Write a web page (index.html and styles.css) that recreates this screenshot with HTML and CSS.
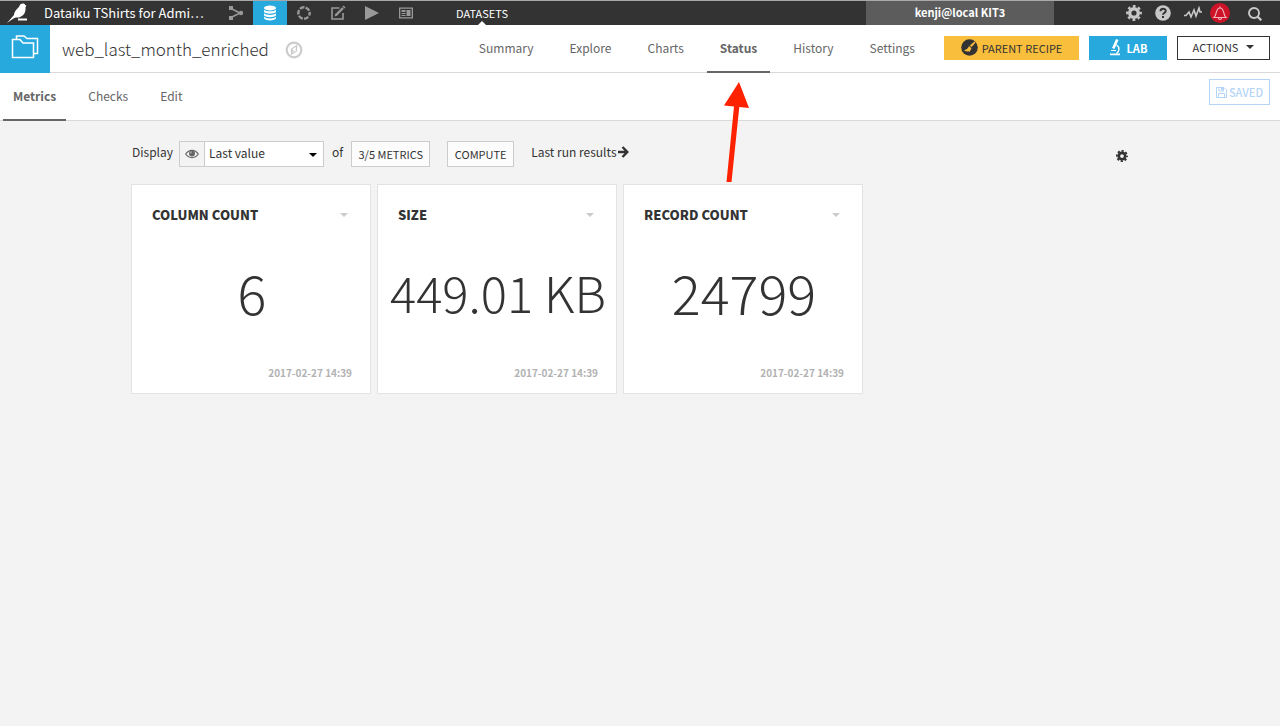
FILE: index.html
```html
<!DOCTYPE html>
<html lang="en">
<head>
<meta charset="utf-8">
<title>web_last_month_enriched</title>
<link rel="stylesheet" href="styles.css">
</head>
<body>
<header class="topbar">
  <a class="logo" href="#" aria-label="Home"><svg width="22" height="20" viewBox="0 0 22 20"><path fill="#fff" d="M0 20L7 12C7.500 7 11 6 12.500 3C13.500 0 17 0 18.300 2L19.500 2.800L18.500 4C19 10 16.500 13 12 14.500H9C7 15 5 16.500 3.500 17.500z"/><path fill="#fff" d="M11 15.500h9v2h-9z"/></svg></a>
  <a class="project" href="#">Dataiku TShirts for Admi…</a>
  <nav class="tools" aria-label="Project">
    <a href="#" aria-label="Flow"><svg width="16" height="16" viewBox="0 0 16 16"><path d="M3 3.500L12 8L3 12.500" fill="none" stroke="currentColor" stroke-width="1.500"/><path fill="currentColor" d="M1 1h4v4H1zM1 11h4v4H1z"/><circle cx="13" cy="8" r="2.200" fill="currentColor"/></svg></a>
    <a class="on" href="#" aria-label="Datasets"><svg width="14" height="16" viewBox="0 0 14 16" fill="currentColor"><ellipse cx="7" cy="3" rx="6" ry="2.500"/><path d="M1 4.700C3 6.800 11 6.800 13 4.700V7C11 9.200 3 9.200 1 7zM1 8.300C3 10.500 11 10.500 13 8.300V10.500C11 12.700 3 12.700 1 10.500zM1 11.800C3 14 11 14 13 11.800V13.500C11 16 3 16 1 13.500z"/></svg></a>
    <a href="#" aria-label="Recipes"><svg width="16" height="16" viewBox="0 0 16 16"><circle cx="8" cy="8" r="5.700" fill="none" stroke="currentColor" stroke-width="2.400" stroke-dasharray="4.670 1.300" stroke-dashoffset="2"/></svg></a>
    <a href="#" aria-label="Notebooks"><svg width="16" height="16" viewBox="0 0 16 16" fill="none" stroke="currentColor"><path stroke-width="1.600" d="M9.500 3H2v11h11V8"/><path stroke-width="2.400" d="M6 10L13 3"/><path fill="currentColor" stroke="none" d="M4.500 11.500l1-3 2 2zM12.500 1.500l1-1 2 2-1 1z"/></svg></a>
    <a href="#" aria-label="Jobs"><svg width="16" height="16" viewBox="0 0 16 16"><path fill="currentColor" d="M1 1L15 8L1 15z"/></svg></a>
    <a href="#" aria-label="Dashboards"><svg width="16" height="16" viewBox="0 0 16 16"><path fill="none" stroke="currentColor" stroke-width="1.300" d="M1.650 3.150h12.700v9.700H1.650z"/><path fill="currentColor" d="M3.500 5h4v2h-4zM3.500 8h4v1h-4zM3.500 10h4v1h-4zM8.500 5h4v6h-4z"/></svg></a>
  </nav>
  <a class="section" href="#">DATASETS</a>
  <button class="user" type="button">kenji@local KIT3</button>
  <div class="system">
    <button type="button" aria-label="Administration"><svg width="16" height="16" viewBox="0 0 16 16"><circle cx="8" cy="8" r="4.300" fill="none" stroke="currentColor" stroke-width="3.400"/><circle cx="8" cy="8" r="6.800" fill="none" stroke="currentColor" stroke-width="2.200" stroke-dasharray="2.740 2.600" stroke-dashoffset="1.370"/></svg></button>
    <button type="button" aria-label="Help"><svg width="16" height="16" viewBox="0 0 16 16"><circle cx="8" cy="8" r="7.800" fill="currentColor"/><path d="M5.500 6.300C5.500 2.800 10.700 3 10.700 6C10.700 8 8 7.900 8 9.800" fill="none" stroke="#333" stroke-width="2"/><path fill="#333" d="M7 11h2v2H7z"/></svg></button>
    <button type="button" aria-label="Activity"><svg width="18" height="14" viewBox="0 0 18 14"><path d="M0 9.500H2L5 6L7 11L10 4L12 10L15 2L16 6H18" fill="none" stroke="currentColor" stroke-width="1.600"/></svg></button>
    <button type="button" aria-label="Notifications"><svg width="20" height="20" viewBox="0 0 20 20"><circle cx="10" cy="10" r="10" fill="#ce1228"/><path d="M4 14.500C7 12 5.500 5 10 5C14.500 5 13 12 16 14.500zM10 5V3.500M8.500 15c0 2 3 2 3 0" fill="none" stroke="#f0b5bc" stroke-width="1.200"/></svg></button>
    <button type="button" aria-label="Search"><svg width="16" height="16" viewBox="0 0 16 16" fill="none" stroke="currentColor"><circle cx="7" cy="8" r="5" stroke-width="1.900"/><path stroke-width="2.300" d="M10.700 11.700L14.300 15.300"/></svg></button>
  </div>
</header>
<div class="header">
  <a class="type" href="#" aria-label="Dataset"><svg width="28" height="24" viewBox="0 0 28 24" fill="none" stroke="#fff" stroke-width="1.500"><path d="M1.500 4.500H9L12 8H22.500V22.500H1.500z"/><path d="M5.500 4V1H13L16 3.500H26.500V18.500H23"/></svg></a>
  <h1>web_last_month_enriched</h1>
  <button class="compass" type="button" aria-label="Navigate"><svg width="18" height="18" viewBox="0 0 18 18"><circle cx="9" cy="9" r="7.300" fill="none" stroke="currentColor" stroke-width="2.200"/><path fill="none" stroke="currentColor" stroke-width="1.300" d="M6.500 8L11.500 4.800V10L6.500 13z"/><path fill="currentColor" d="M6.500 8L9 9.500L6.500 13z"/></svg></button>
  <nav class="tabs" aria-label="Dataset">
    <a href="#">Summary</a><a href="#">Explore</a><a href="#">Charts</a><a class="on" href="#">Status</a><a href="#">History</a><a href="#">Settings</a>
  </nav>
  <div class="actions">
    <button class="btn parent" type="button"><svg width="17" height="17" viewBox="0 0 17 17"><circle cx="8.500" cy="8.500" r="8.300" fill="#333"/><path fill="#f9be3b" d="M13.500 2.500L14.500 3.500L10.700 8L8.800 6.500zM8 7L10.500 9.300L8.500 13L7.500 12L7 13L6 12L5 12.500L3 11C5 11 7 9.500 8 7z"/></svg>PARENT RECIPE</button>
    <button class="btn lab" type="button"><svg width="12" height="17" viewBox="0 0 12 17"><path fill="#fff" d="M7 0L9.500 1L5.500 10L3 9zM1 14.500h10v1.800H1zM2 11h5v1H2z"/><path d="M7.500 6C11 8 10.500 12.500 7.500 14.500" fill="none" stroke="#fff" stroke-width="1.400"/></svg>LAB</button>
    <button class="btn menu" type="button">ACTIONS<span class="caret"></span></button>
  </div>
</div>
<div class="subheader">
  <nav class="subtabs" aria-label="Status"><a class="on" href="#">Metrics</a><a href="#">Checks</a><a href="#">Edit</a></nav>
  <button class="saved" type="button" disabled><svg width="11" height="11" viewBox="0 0 11 11" fill="none" stroke="currentColor"><path d="M.5.500H8L10.500 3V10.500H.5z"/><path d="M2.500 10V6.500h6V10M3 1v3h4.500V1"/><path fill="currentColor" stroke="none" d="M5 1h2v2H5z"/></svg>SAVED</button>
</div>
<main>
  <div class="controls">
    <label for="view">Display</label>
    <div class="picker"><span class="eye"><svg width="14" height="10" viewBox="0 0 14 10"><path d="M.7 5C4 .2 10 .2 13.300 5C10 9.800 4 9.800 .7 5z" fill="none" stroke="currentColor" stroke-width="1.200"/><circle cx="7" cy="4.500" r="3" fill="currentColor"/><path d="M5.300 4.500Q5.300 3 7 2.800" fill="none" stroke="#ddd" stroke-width=".7"/></svg></span><select id="view"><option>Last value</option></select><span class="caret"></span></div>
    <span class="of">of</span>
    <button class="small metrics" type="button">3/5 METRICS</button>
    <button class="small compute" type="button">COMPUTE</button>
    <a class="last" href="#">Last run results<svg width="12" height="12" viewBox="0 0 12 12"><path d="M1 6H10M5.500 1L10.300 6L5.500 11" fill="none" stroke="currentColor" stroke-width="2.400"/></svg></a>
    <button class="gear" type="button" aria-label="Settings"><svg width="12" height="12" viewBox="0 0 16 16"><circle cx="8" cy="8" r="4.300" fill="none" stroke="currentColor" stroke-width="3.600"/><circle cx="8" cy="8" r="6.800" fill="none" stroke="currentColor" stroke-width="2.400" stroke-dasharray="2.940 2.400" stroke-dashoffset="1.470"/></svg></button>
  </div>
  <div class="cards">
    <section class="card"><div class="cardhead"><h2>COLUMN COUNT</h2><button type="button" aria-label="Column count menu"><span class="caret"></span></button></div><p class="value">6</p><time>2017-02-27 14:39</time></section>
    <section class="card"><div class="cardhead"><h2>SIZE</h2><button type="button" aria-label="Size menu"><span class="caret"></span></button></div><p class="value long">449.01 KB</p><time>2017-02-27 14:39</time></section>
    <section class="card"><div class="cardhead"><h2>RECORD COUNT</h2><button type="button" aria-label="Record count menu"><span class="caret"></span></button></div><p class="value">24799</p><time>2017-02-27 14:39</time></section>
  </div>
</main>
<svg class="pointer" width="26" height="101" viewBox="0 0 26 101" aria-hidden="true"><path fill="#ff2200" d="M15 0L25 26L15.300 25L7.500 100H2.500L10 24.500L0 23.500z"/></svg>
</body>
</html>
```

FILE: styles.css
```css
* { box-sizing: border-box; }
body {
  margin: 0;
  min-height: 100vh;
  background: #f3f3f3;
  color: #333;
  font: 12px/20px "Noto Sans CJK SC", "Noto Sans", sans-serif;
}
a { color: inherit; text-decoration: none; }
button { font: inherit; color: inherit; background: none; border: 0; padding: 0; }
svg { display: block; flex: none; }
h1, h2, p { margin: 0; font-weight: 400; }
.caret { border: 4px solid transparent; border-top-color: currentColor; border-bottom: 0; }

.topbar {
  display: flex;
  height: 25px;
  background: #333;
  border-top: 1px solid #a8a8a8;
  color: #fff;
}
.topbar > * { display: flex; align-items: center; }
.logo { padding-left: 7px; width: 44px; }
.project { width: 175px; font-size: 13px; white-space: nowrap; }
.tools { color: #999; align-items: stretch; }
.tools a { display: flex; width: 34px; align-items: center; justify-content: center; }
.tools .on { background: #28a9dd; color: #fff; }
.section { position: relative; margin-left: 33px; font-size: 11px; }
.section::after {
  content: "";
  position: absolute;
  bottom: 0;
  left: 50%;
  margin-left: -4px;
  border: 4px solid transparent;
  border-bottom-color: #fff;
  border-top: 0;
}
.topbar .user { margin-left: auto; width: 188px; padding-bottom: 2px; justify-content: center; background: #5c5c5c; font-size: 11px; font-weight: 700; }
.system { width: 226px; padding-right: 17px; justify-content: flex-end; gap: 13px; color: #c8c8c8; }
.system button:nth-child(4) { margin-left: -5px; }
.system button:nth-child(5) { margin-left: 4px; }

.header { display: flex; align-items: center; height: 48px; background: #fff; border-bottom: 1px solid #d9d9d9; }
.type { display: grid; place-items: center; align-self: stretch; width: 50px; margin-bottom: -1px; padding-bottom: 4px; background: #28a9dd; }
h1 { margin-left: 12px; font-size: 17px; line-height: 24px; font-weight: 300; }
.compass { margin: 3px 0 0 16px; color: #ccc; }
.tabs { display: flex; gap: 10px; margin-left: auto; margin-right: 16px; align-self: stretch; color: #666; }
.tabs a { padding: 13px 13px 0; margin-bottom: -1px; border-bottom: 2px solid transparent; }
.tabs .on, .subtabs .on { border-color: #666; font-weight: 700; }
.actions { display: flex; gap: 10px; margin: 0 10px 2px 0; }
.btn { display: flex; align-items: center; justify-content: center; height: 24px; font-size: 11px; }
.parent { width: 135px; gap: 4px; background: #f9be3b; }
.lab { width: 78px; gap: 6px; background: #28a9dd; color: #fff; font-weight: 700; }
.menu { width: 93px; gap: 8px; padding-bottom: 1px; border: 1px solid #333; }

.subheader { display: flex; justify-content: space-between; height: 48px; background: #fff; border-bottom: 1px solid #d9d9d9; }
.subtabs { display: flex; gap: 12px; margin-left: 3px; color: #666; }
.subtabs a { padding: 13px 10px 0; margin-bottom: -1px; border-bottom: 2px solid transparent; }
.saved { display: flex; align-items: center; justify-content: center; gap: 2px; width: 61px; height: 26px; margin: 6px 10px 0 0; border: 1px solid #b5d5f8; color: #b5d5f8; font-size: 11px; font-weight: 500; }

main { max-width: 1018px; margin: 0 auto; padding-top: 20px; }
.controls { display: flex; align-items: center; height: 26px; padding: 0 21px 0 1px; }
.controls label, .of, .last { padding-bottom: 4px; }
.picker { position: relative; display: flex; width: 145px; height: 26px; margin: 0 8px 0 6px; border: 1px solid #ccc; background: #fff; }
.eye { display: grid; place-items: center; width: 25px; background: #f3f3f3; border-right: 1px solid #ccc; color: #666; }
.picker select { flex: 1; appearance: none; border: 0; background: none; padding: 0 4px 2px; font: inherit; color: inherit; }
.picker .caret { position: absolute; right: 6px; top: 11px; color: #000; }
.small { height: 26px; border: 1px solid #ccc; background: #fcfcfc; font-size: 11px; }
.metrics { width: 79px; margin-left: 8px; }
.compute { width: 67px; margin-left: 17px; }
.last { display: flex; align-items: center; margin-left: 17px; }
.gear { margin: 3px 0 0 auto; }

.cards { display: flex; flex-wrap: wrap; gap: 6px; margin-top: 17px; }
.card { display: flex; flex-direction: column; width: 240px; height: 210px; padding: 20px 18px 10px 20px; background: #fff; border: 1px solid #e3e3e3; }
.cardhead { display: flex; align-items: center; justify-content: space-between; padding-right: 4px; }
.cardhead .caret { display: block; color: #ccc; }
h2 { font-size: 13px; line-height: 20px; font-weight: 900; }
.value { flex: 1; display: flex; align-items: center; justify-content: center; margin: 0 -10px; padding-bottom: 4px; font-size: 54px; line-height: 64px; font-weight: 300; white-space: nowrap; }
.long { font-size: 49px; }
.card time { align-self: flex-end; font-size: 10px; color: #b2b2b2; font-weight: 700; }
.pointer { position: absolute; left: 724px; top: 82px; pointer-events: none; }
```
